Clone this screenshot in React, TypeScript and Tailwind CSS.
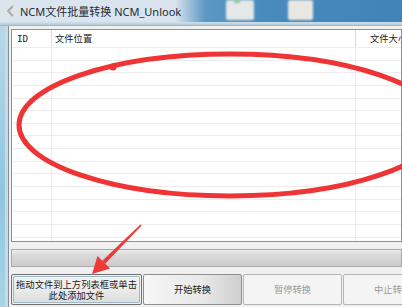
import React from "react";

const cjk = { fontFamily: '"Noto Sans", "Noto Sans CJK SC", sans-serif' };

export default function App() {
  const rows = Array.from({ length: 16 });
  return (
    <div className="relative w-[402px] h-[307px] overflow-hidden bg-[#f0f0f0] flex flex-col" style={cjk}>
      {/* title bar */}
      <div className="relative h-[22px] shrink-0 flex items-center bg-[linear-gradient(to_right,#dbe5ee_0px,#d9e4ee_175px,#5d98c4_205px,#4a8bbd_260px,#3f83b8_402px)]">
        <div className="absolute left-[226px] top-0 w-[28px] h-[20px] bg-[#e4e8e6] rounded-[2px] blur-[1px]" />
        <div className="absolute left-[234px] top-0 w-[6px] h-[3px] bg-[#8fc79a] blur-[1px]" />
        <div className="absolute left-[288px] top-0 w-[25px] h-[20px] bg-[#e9e7e2] rounded-[2px] blur-[1px]" />
        <svg width="12" height="14" viewBox="0 0 12 14" className="ml-[4px] shrink-0">
          <path d="M9 2 L4 7 L9 12" fill="none" stroke="#b8a8a4" strokeWidth="2" />
        </svg>
        <span className="relative ml-[4px] text-[11px] leading-none text-[#1f2a33] whitespace-nowrap">NCM文件批量转换 NCM_Unlook</span>
      </div>
      {/* frame strip */}
      <div className="h-[4px] shrink-0 bg-[linear-gradient(#cfe0ec,#bcd0de_60%,#9aaab6)]" />
      {/* body */}
      <div className="flex flex-1 min-h-0">
        <div className="w-[5px] shrink-0 bg-[linear-gradient(#b9d8e8,#8fc6df_60%,#a8d4e6)]" />
        <div className="w-[3px] shrink-0 bg-[#cdd9e1]" />
        <div className="w-[1px] shrink-0 bg-[#7f8f9b]" />
        <div className="flex-1 min-w-0 flex flex-col pl-[2px] pt-[3px]">
          {/* list view */}
          <div className="h-[213px] shrink-0 border border-[#8a9098] bg-white overflow-hidden flex flex-col">
            <div className="h-[18px] shrink-0 flex text-[9.3px] leading-none text-[#222] border-b border-[#eeeeee]">
              <div className="w-[40px] shrink-0 flex items-center pl-[5px] border-r border-[#dcdcdc]" style={{ fontFamily: '"DejaVu Sans Mono", monospace' }}>ID</div>
              <div className="w-[304px] shrink-0 flex items-center pl-[3px] border-r border-[#dcdcdc]">文件位置</div>
              <div className="flex-1 flex items-center pl-[14px] whitespace-nowrap">文件大小</div>
            </div>
            {rows.map((_, i) => (
              <div key={i} className="h-[12.65px] shrink-0 flex border-b border-[#ececec]">
                <div className="w-[40px] shrink-0 border-r border-[#efefef]" />
                <div className="w-[304px] shrink-0 border-r border-[#efefef]" />
                <div className="flex-1" />
              </div>
            ))}
          </div>
          {/* progress bar */}
          <div className="mt-[7px] h-[18px] shrink-0 border border-[#a8a8a8] bg-[linear-gradient(#ececec,#d9d9d9_35%,#cccccc)]" />
          {/* buttons */}
          <div className="mt-[7px] h-[31px] shrink-0 flex gap-[1px] text-[9.3px] leading-[11px]">
            <div className="w-[131px] shrink-0 border border-[#707070] rounded-[2px] p-[1px]">
              <div className="h-full border border-[#9fb8c8] rounded-[1px] bg-[linear-gradient(#f2f2f2,#ebebeb_50%,#dddddd)] flex flex-col items-center justify-center text-[#1a1a1a] whitespace-nowrap">
                <span>拖动文件到上方列表框或单击</span>
                <span>此处添加文件</span>
              </div>
            </div>
            <div className="w-[99px] shrink-0 border border-[#8e8e8e] rounded-[2px] bg-[linear-gradient(to_right,#f6f6f6,#e8e8e8_60%,#cfcfcf)] flex items-center justify-center text-[#1a1a1a]">
              开始转换
            </div>
            <div className="w-[99px] shrink-0 border border-[#b5b5b5] rounded-[2px] bg-[#f4f4f4] flex items-center justify-center text-[#9a9a9a]">
              暂停转换
            </div>
            <div className="w-[99px] shrink-0 border border-[#b5b5b5] rounded-[2px] bg-[#f4f4f4] flex items-center justify-center text-[#9a9a9a] whitespace-nowrap">
              中止转换
            </div>
          </div>
        </div>
      </div>
      {/* red annotations */}
      <svg className="absolute inset-0 pointer-events-none" width="402" height="307" viewBox="0 0 402 307">
        <ellipse cx="230" cy="125" rx="211" ry="71" fill="none" stroke="#ee3434" strokeWidth="5" />
        <circle cx="113" cy="67" r="3.5" fill="#ee3434" />
        <polygon points="141.6,225.6 140.4,224.4 102.3,260.8 105.2,263.7" fill="#ef3838" />
        <polygon points="92,274 97.5,256 110,268.5" fill="#ef3838" />
      </svg>
    </div>
  );
}
